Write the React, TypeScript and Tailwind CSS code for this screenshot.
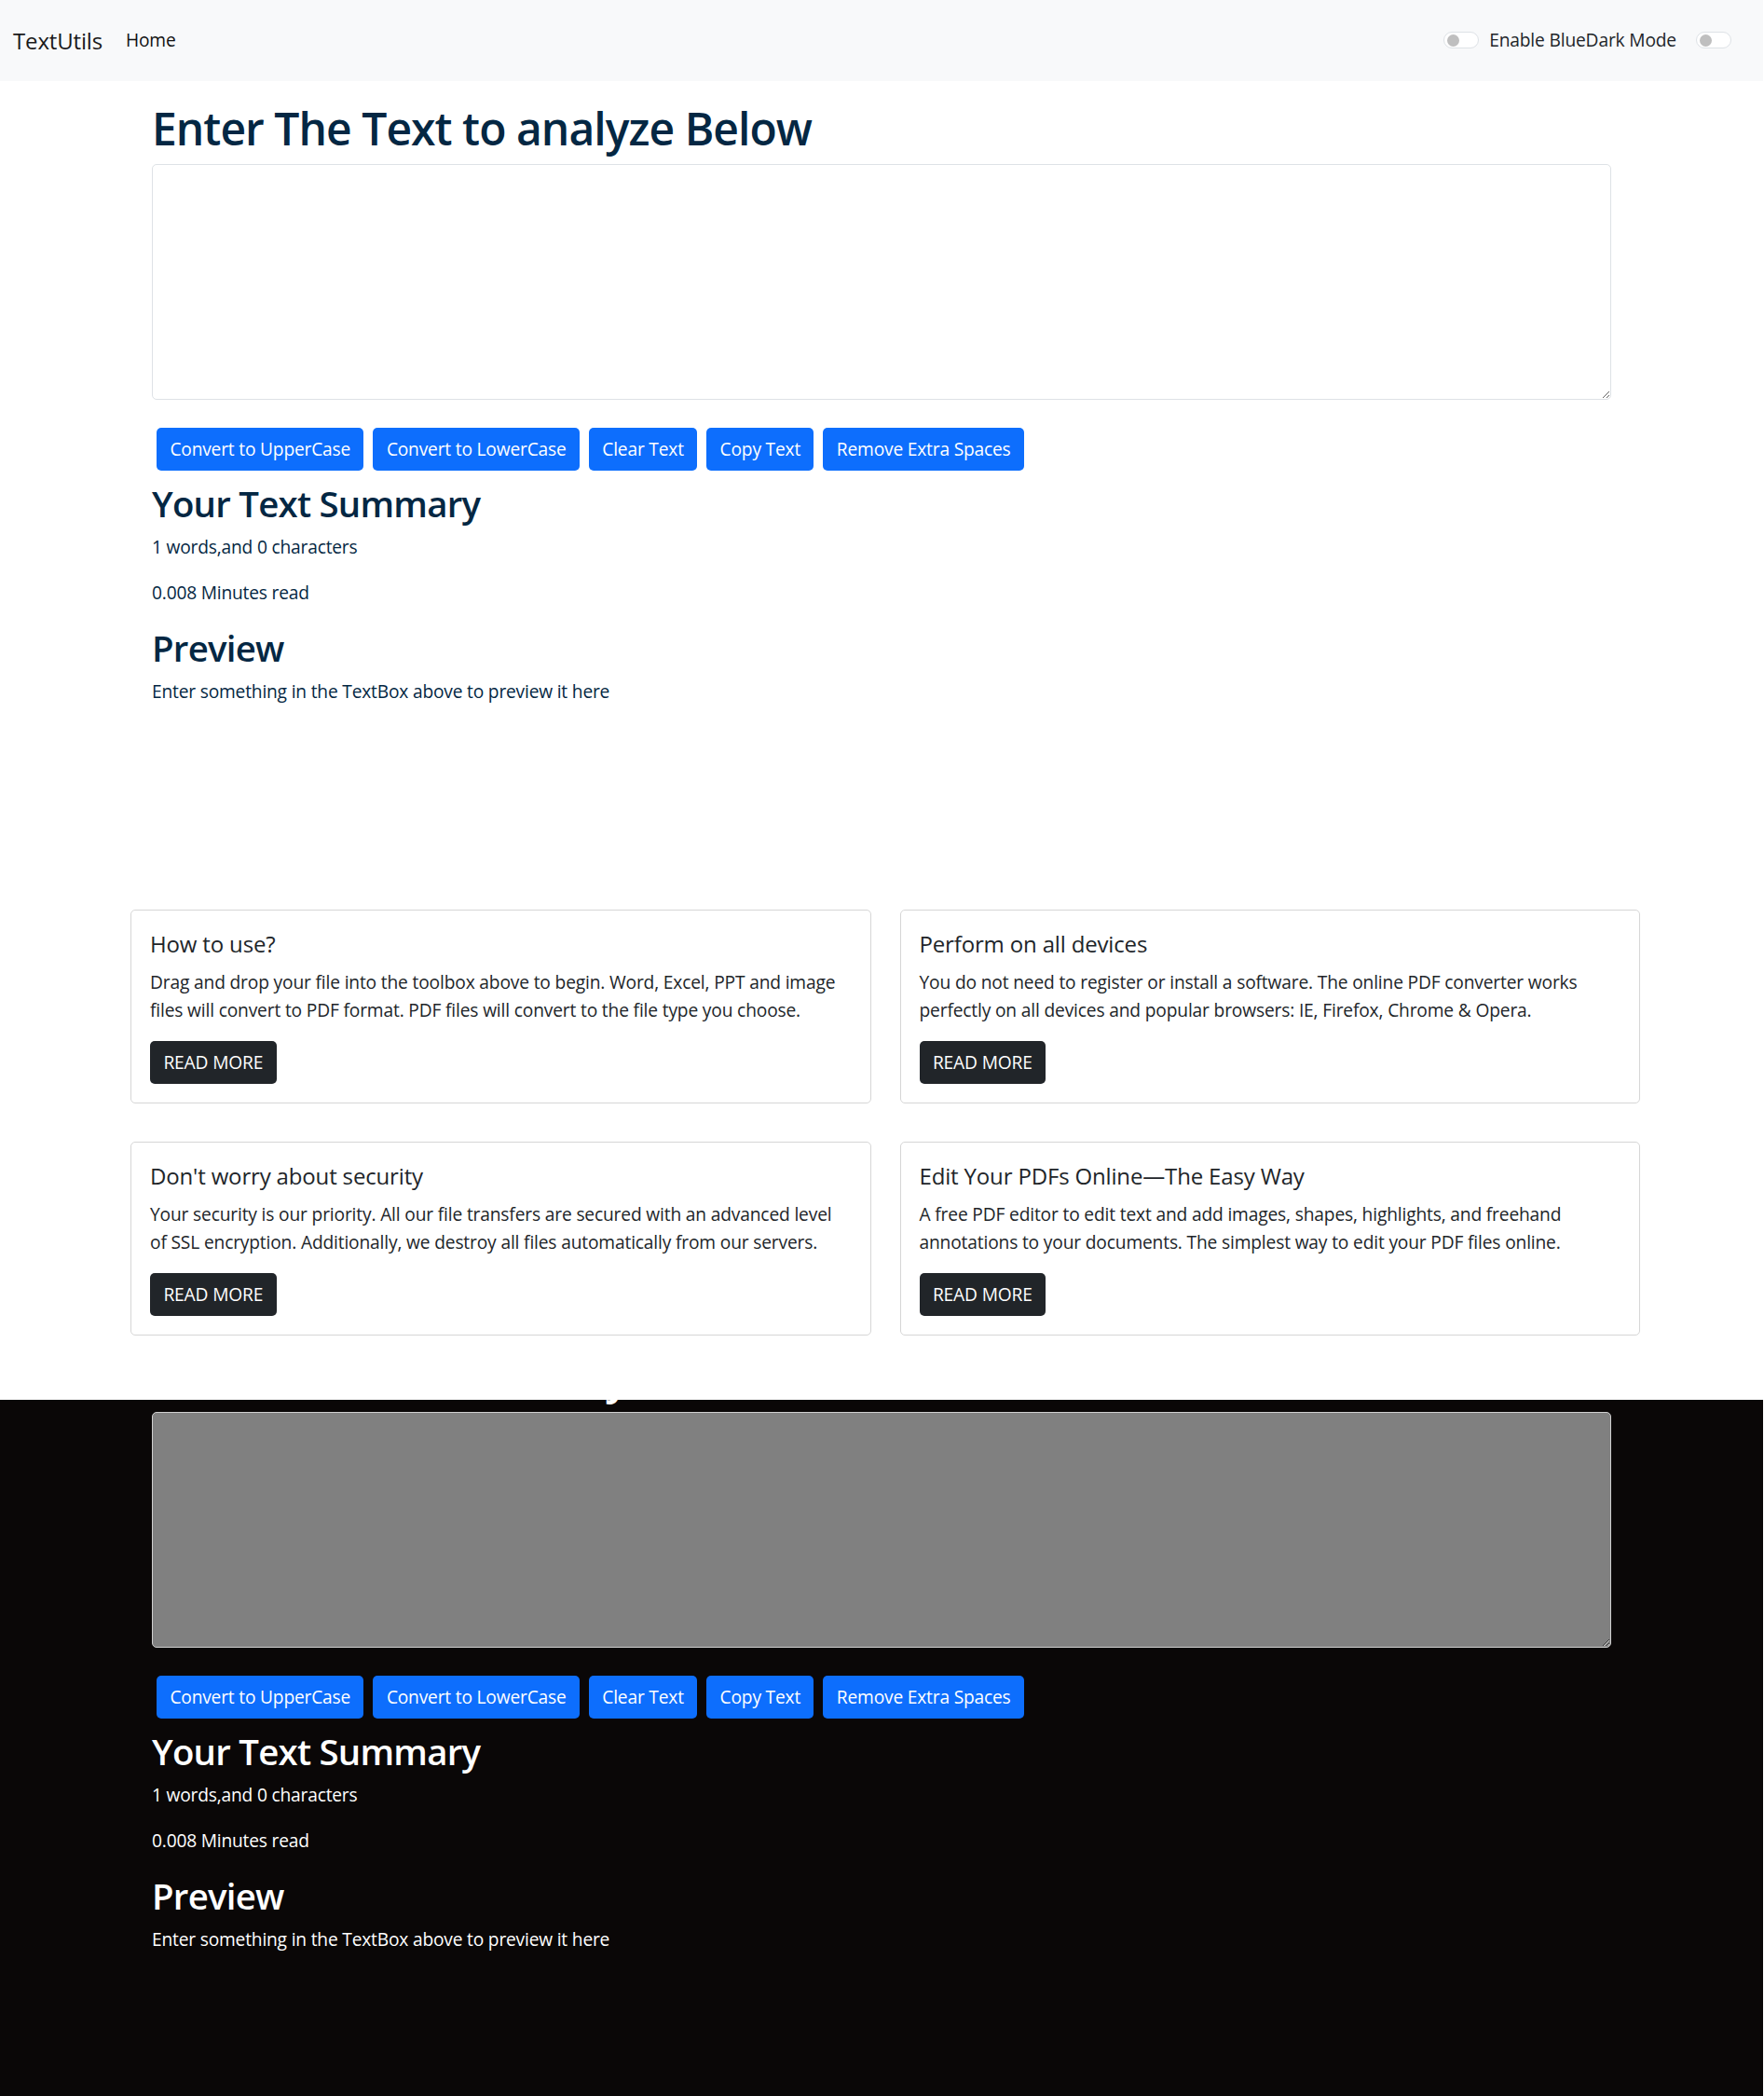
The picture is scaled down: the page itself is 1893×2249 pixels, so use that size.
import React from "react";

const actions = [
  "Convert to UpperCase",
  "Convert to LowerCase",
  "Clear Text",
  "Copy Text",
  "Remove Extra Spaces",
];

const cards = [
  {
    title: "How to use?",
    lines: [
      "Drag and drop your file into the toolbox above to begin. Word, Excel, PPT and image",
      "files will convert to PDF format. PDF files will convert to the file type you choose.",
    ],
  },
  {
    title: "Perform on all devices",
    lines: [
      "You do not need to register or install a software. The online PDF converter works",
      "perfectly on all devices and popular browsers: IE, Firefox, Chrome & Opera.",
    ],
  },
  {
    title: "Don't worry about security",
    lines: [
      "Your security is our priority. All our file transfers are secured with an advanced level",
      "of SSL encryption. Additionally, we destroy all files automatically from our servers.",
    ],
  },
  {
    title: "Edit Your PDFs Online—The Easy Way",
    lines: [
      "A free PDF editor to edit text and add images, shapes, highlights, and freehand",
      "annotations to your documents. The simplest way to edit your PDF files online.",
    ],
  },
];

function Switch({ className = "" }: { className?: string }) {
  return (
    <span
      className={`flex h-[18px] w-[38px] items-center rounded-full border border-[#dee2e6] bg-white pl-[3px] ${className}`}
    >
      <span className="h-[13px] w-[13px] rounded-full bg-[#bfbfbf]" />
    </span>
  );
}

function TextForm({ dark }: { dark: boolean }) {
  return (
    <div className={`ml-[163px] w-[1566px] ${dark ? "text-white" : "text-[#042743]"}`}>
      <h1 className="text-[48px] leading-[58px] font-semibold tracking-[-0.02em]">
        Enter The Text to analyze Below
      </h1>
      <textarea
        rows={8}
        className={`mt-[9px] block h-[253px] w-full rounded-[5px] border px-[14px] py-[7px] text-[19.2px] outline-none ${
          dark ? "border-[#cfcfcf] bg-[#808080] text-white" : "border-[#dee2e6] bg-white text-[#212529]"
        }`}
      />
      <div className="mt-[30px] flex gap-[10px] pl-[5px]">
        {actions.map((label) => (
          <button
            key={label}
            className="h-[46px] rounded-[5px] bg-[#0d6efd] px-[14.4px] text-[19.2px] leading-[28.8px] tracking-[-0.01em] text-white"
          >
            {label}
          </button>
        ))}
      </div>
      <h2 className="mt-[12px] text-[38.4px] leading-[46px] font-semibold tracking-[-0.02em]">
        Your Text Summary
      </h2>
      <p className="mt-[10px] text-[19.2px] leading-[28.8px] tracking-[-0.01em]">1 words,and 0 characters</p>
      <p className="mt-[20px] text-[19.2px] leading-[28.8px] tracking-[-0.01em]">0.008 Minutes read</p>
      <h2 className="mt-[21px] text-[38.4px] leading-[46px] font-semibold tracking-[-0.02em]">Preview</h2>
      <p className="mt-[10px] text-[19.2px] leading-[28.8px] tracking-[-0.01em]">
        Enter something in the TextBox above to preview it here
      </p>
    </div>
  );
}

export default function App() {
  return (
    <div className="flex min-h-[2249px] w-[1892px] flex-col bg-white font-['Open_Sans',sans-serif]">
      <nav className="flex h-[87px] items-center bg-[#f8f9fa] pr-[34px] pl-[14px] tracking-[-0.01em]">
        <span className="w-[121px] text-[24px] text-[#1a1a1a]">TextUtils</span>
        <span className="text-[19.2px] text-[#111]">Home</span>
        <div className="ml-auto flex items-center">
          <Switch />
          <span className="ml-[11px] text-[19.2px] text-[#212529]">Enable BlueDark Mode</span>
          <Switch className="ml-[21px]" />
        </div>
      </nav>

      <div className="pt-[22px]">
        <TextForm dark={false} />
      </div>

      <div className="mt-[220px] ml-[140px] grid w-[1620px] grid-cols-2 gap-x-[31px] gap-y-[41px]">
        {cards.map((card) => (
          <div
            key={card.title}
            className="rounded-[5px] border border-[#d6d6d6] px-[20px] pt-[21px] pb-[20px] text-[#212529] tracking-[-0.01em]"
          >
            <h5 className="text-[24px] leading-[29px] font-medium">{card.title}</h5>
            <p className="mt-[12px] text-[19.2px] leading-[30px]">
              {card.lines[0]}
              <br />
              {card.lines[1]}
            </p>
            <button className="mt-[18px] h-[46px] rounded-[5px] bg-[#212529] px-[14.4px] text-[19.2px] text-white">
              READ MORE
            </button>
          </div>
        ))}
      </div>

      <div className="flex-1 bg-[linear-gradient(to_bottom,#ffffff_69px,#0a0707_69px)] pt-[15px]">
        <TextForm dark />
      </div>
    </div>
  );
}
